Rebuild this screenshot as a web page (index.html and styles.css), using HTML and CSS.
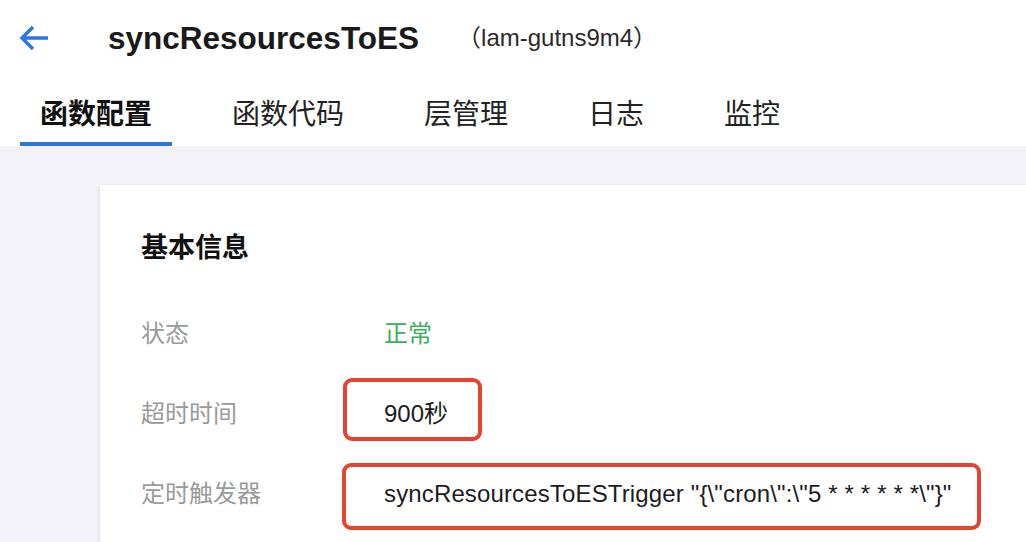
FILE: index.html
```html
<!DOCTYPE html>
<html lang="zh-CN">
<head>
<meta charset="utf-8">
<title>syncResourcesToES</title>
<link rel="stylesheet" href="styles.css">
</head>
<body>
<header class="header">
  <div class="topbar">
    <svg class="back" width="30" height="26" viewBox="0 0 30 26" aria-hidden="true">
      <path d="M3 13 H29 M14 2 L3 13 L14 24" fill="none" stroke="#2f74e3" stroke-width="3.4" stroke-linejoin="miter"/>
    </svg>
    <h1 class="title">syncResourcesToES</h1>
    <span class="fn-id">（lam-gutns9m4）</span>
  </div>
  <nav class="tabs">
    <span class="tab active">函数配置</span>
    <span class="tab">函数代码</span>
    <span class="tab">层管理</span>
    <span class="tab">日志</span>
    <span class="tab">监控</span>
  </nav>
</header>
<main class="main">
  <section class="card">
    <h2 class="card-title">基本信息</h2>
    <div class="info">
      <div class="label">状态</div>
      <div class="value ok">正常</div>
      <div class="label">超时时间</div>
      <div class="value">900秒<span class="mark mark-timeout"></span></div>
      <div class="label">定时触发器</div>
      <div class="value wide">syncResourcesToESTrigger "{\"cron\":\"5 * * * * * *\"}"<span class="mark mark-trigger"></span></div>
    </div>
  </section>
</main>
</body>
</html>
```

FILE: styles.css
```css
html, body {
  margin: 0;
  padding: 0;
  height: 100%;
  overflow: hidden;
}
body {
  font-family: "Liberation Sans", "Noto Sans CJK SC", Arial, sans-serif;
  color: #1f1f1f;
  background: #f2f2f8;
}
.header {
  background: #ffffff;
}
.topbar {
  display: flex;
  align-items: center;
  height: 76px;
  padding-left: 19px;
}
.back {
  display: block;
  flex: none;
}
.title {
  margin: 0 0 0 59px;
  font-size: 31.5px;
  font-weight: bold;
  color: #1a1a1a;
  line-height: 40px;
}
.fn-id {
  margin-left: 38px;
  font-size: 24px;
  color: #2a2a2a;
  line-height: 30px;
}
.tabs {
  display: flex;
  gap: 40px;
  padding-left: 20px;
}
.tab {
  padding: 19px 20px 7px;
  font-size: 28px;
  line-height: 40px;
  color: #222;
  border-bottom: 4px solid transparent;
}
.tab.active {
  font-weight: bold;
  color: #111;
  border-bottom-color: #2f74dc;
}
.main {
  height: calc(100% - 146px);
  padding: 39px 0 0 100px;
  box-sizing: border-box;
  background: #f2f2f8;
}
.card {
  height: 100%;
  background: #ffffff;
  box-shadow: 0 1px 4px rgba(0, 0, 0, 0.12);
  padding: 44px 0 0 41px;
  box-sizing: border-box;
}
.card-title {
  margin: 0;
  font-size: 27px;
  line-height: 38px;
  font-weight: bold;
  color: #111;
}
.info {
  display: grid;
  grid-template-columns: 243px 1fr;
  grid-auto-rows: 32px;
  row-gap: 48px;
  margin-top: 51px;
  font-size: 24px;
  line-height: 32px;
}
.label {
  color: #9a9a9a;
}
.value {
  position: relative;
  color: #1c1c1c;
  white-space: nowrap;
}
.value.wide {
  letter-spacing: 0.14px;
}
.value.ok {
  color: #3cae5c;
}
.mark {
  position: absolute;
  border: 4px solid #e4442f;
  border-radius: 9px;
  box-sizing: border-box;
}
.mark-timeout {
  left: -41px;
  top: -20px;
  width: 139px;
  height: 63px;
}
.mark-trigger {
  left: -42px;
  top: -15px;
  width: 639px;
  height: 67px;
}
```
